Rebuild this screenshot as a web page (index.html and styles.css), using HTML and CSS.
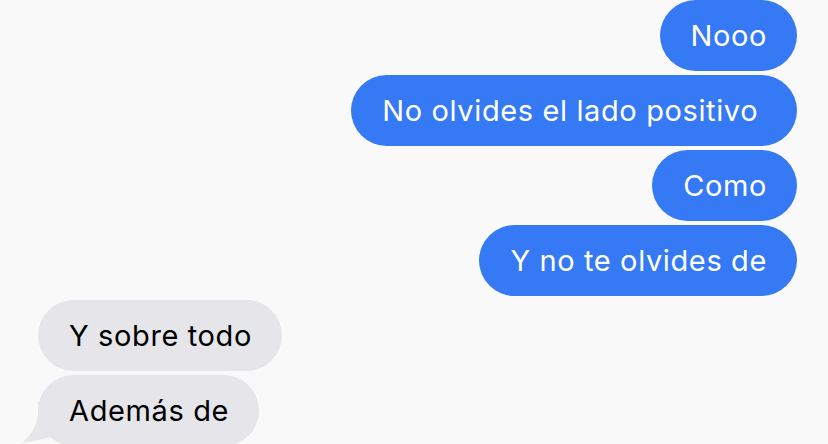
FILE: index.html
```html
<!DOCTYPE html>
<html lang="es">
<head>
    <meta charset="UTF-8">
    <meta name="viewport" content="width=device-width, initial-scale=1.0">
    <title>Mensajes</title>
    <link rel="stylesheet" href="styles.css">
</head>
<body>
    <div class="thread">
        <div class="bubble sent">Nooo</div>
        <div class="bubble sent">No olvides el lado positivo&nbsp;</div>
        <div class="bubble sent">Como</div>
        <div class="bubble sent">Y no te olvides de</div>
        <div class="bubble received">Y sobre todo</div>
        <div class="bubble received last">
            Además de
            <svg class="tail" viewBox="0 0 44 44" width="44" height="44">
                <path d="M20 0 H40 V36 L32 35 C22 38 12 40 4 40.5 C12 34 20 24 20 10 Z" fill="#e5e5ea"/>
            </svg>
        </div>
    </div>
</body>
</html>
```

FILE: styles.css
```css
body {
    margin: 0;
    padding: 0;
    background: #f9f9f9;
    font-family: 'Inter', 'Roboto', sans-serif;
    overflow: hidden;
}
.thread {
    display: flex;
    flex-direction: column;
    gap: 4px;
    padding: 0 31px 0 38px;
}
.bubble {
    height: 71px;
    line-height: 72px;
    padding: 0 30px 0 31px;
    border-radius: 36px;
    font-size: 29px;
    letter-spacing: 0.62px;
    white-space: nowrap;
    box-sizing: border-box;
}
.sent {
    align-self: flex-end;
    background: #3579f5;
    color: #fff;
}
.received {
    align-self: flex-start;
    background: #e5e5ea;
    color: #000;
    position: relative;
}
.tail {
    position: absolute;
    left: -20px;
    bottom: 0;
}
```
